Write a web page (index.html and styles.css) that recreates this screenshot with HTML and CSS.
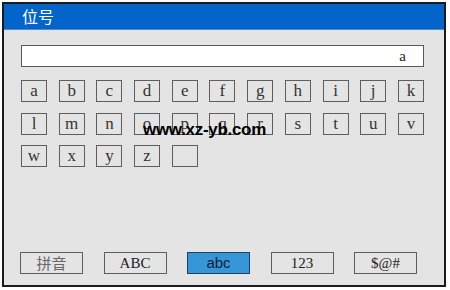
FILE: index.html
```html
<!DOCTYPE html>
<html lang="zh">

<head>
    <meta charset="UTF-8">
    <title>位号</title>
    <link rel="stylesheet" href="styles.css">
</head>

<body>
    <div id="dialog">
        <header id="titleBar">位号</header>
        <section id="content">
            <div id="inputBox">a</div>
            <div id="keys">
                <span class="key">a</span>
                <span class="key">b</span>
                <span class="key">c</span>
                <span class="key">d</span>
                <span class="key">e</span>
                <span class="key">f</span>
                <span class="key">g</span>
                <span class="key">h</span>
                <span class="key">i</span>
                <span class="key">j</span>
                <span class="key">k</span>
                <span class="key">l</span>
                <span class="key">m</span>
                <span class="key">n</span>
                <span class="key">o</span>
                <span class="key">p</span>
                <span class="key">q</span>
                <span class="key">r</span>
                <span class="key">s</span>
                <span class="key">t</span>
                <span class="key">u</span>
                <span class="key">v</span>
                <span class="key">w</span>
                <span class="key">x</span>
                <span class="key">y</span>
                <span class="key">z</span>
                <span class="key"></span>
            </div>
            <div id="modes">
                <span class="mode cjk">拼音</span>
                <span class="mode">ABC</span>
                <span class="mode active">abc</span>
                <span class="mode">123</span>
                <span class="mode">$@#</span>
            </div>
            <div id="watermark">www.xz-yb.com</div>
        </section>
    </div>
</body>

</html>
```

FILE: styles.css
```css
body {
    margin: 0;
    padding: 0;
    background-color: #ffffff;
}

#dialog {
    margin: 2px 0 0 2px;
    width: 440px;
    height: 281px;
    border: 2px solid #1c1c1c;
    background-color: #e4e4e4;
    display: flex;
    flex-direction: column;
}

#titleBar {
    height: 25px;
    border-bottom: 1px solid #4a8ad6;
    background-color: #0364c9;
    color: #ffffff;
    font-family: "Noto Sans CJK SC", sans-serif;
    font-size: 16px;
    line-height: 25px;
    padding-left: 18px;
}

#content {
    position: relative;
    flex: 1;
    display: flex;
    flex-direction: column;
    padding: 15px 20px 11px 17px;
}

#inputBox {
    height: 20px;
    border: 1px solid #5a5a5a;
    background-color: #ffffff;
    font-family: "Liberation Serif", serif;
    font-size: 15px;
    line-height: 20px;
    color: #222222;
    text-align: right;
    padding-right: 17px;
}

#keys {
    margin-top: 13px;
    display: grid;
    grid-template-columns: repeat(11, 26px);
    justify-content: space-between;
    row-gap: 10.5px;
}

.key {
    height: 20px;
    border: 1px solid #5e5e5e;
    font-family: "Liberation Serif", serif;
    font-size: 17px;
    line-height: 19px;
    color: #333333;
    text-align: center;
}

#modes {
    margin-top: auto;
    margin-left: -1px;
    display: flex;
    gap: 20.5px;
}

.mode {
    width: 61px;
    height: 20px;
    border: 1px solid #5e5e5e;
    font-family: "Liberation Serif", serif;
    font-size: 15px;
    line-height: 20px;
    color: #222222;
    text-align: center;
}

.mode.cjk {
    font-family: "Noto Sans CJK SC", sans-serif;
    color: #666666;
    font-size: 15px;
}

.mode.active {
    background-color: #3696d8;
    border-color: #1f3f68;
    font-family: "Liberation Sans", sans-serif;
    color: #10203a;
}

#watermark {
    position: absolute;
    left: 139px;
    top: 90px;
    font-family: "Liberation Sans", sans-serif;
    font-weight: bold;
    font-size: 17px;
    letter-spacing: -0.3px;
    color: #000000;
}
```
